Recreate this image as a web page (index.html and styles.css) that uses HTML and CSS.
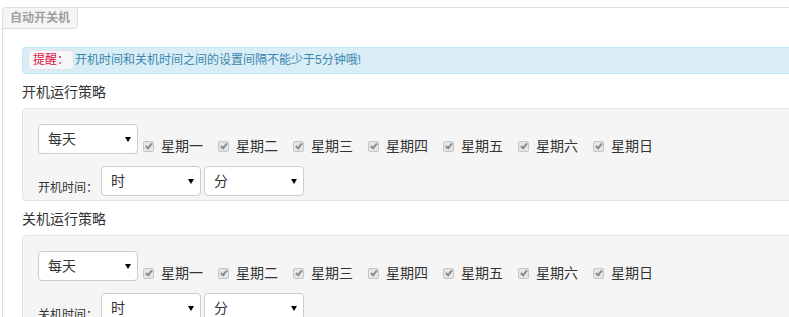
FILE: index.html
```html
<!DOCTYPE html>
<html lang="zh-CN">
<head>
    <meta charset="UTF-8">
    <meta name="viewport" content="width=device-width, initial-scale=1.0">
    <title>自动开关机</title>
    <link rel="stylesheet" href="styles.css">
</head>
<body>
    <div class="example">
        <span class="legend">自动开关机</span>

        <div class="alert"><code>提醒：</code>开机时间和关机时间之间的设置间隔不能少于5分钟哦!</div>

        <!-- 开机 -->
        <h4 class="title">开机运行策略</h4>
        <div class="well">
            <div class="row">
                <span class="sel"><select><option>每天</option></select></span>
                <div class="days">
                    <label class="day"><span class="cb"></span>星期一</label>
                    <label class="day"><span class="cb"></span>星期二</label>
                    <label class="day"><span class="cb"></span>星期三</label>
                    <label class="day"><span class="cb"></span>星期四</label>
                    <label class="day"><span class="cb"></span>星期五</label>
                    <label class="day"><span class="cb"></span>星期六</label>
                    <label class="day"><span class="cb"></span>星期日</label>
                </div>
            </div>
            <div class="row time-row">
                <span class="time-label">开机时间：</span>
                <span class="sel"><select><option>时</option></select></span>
                <span class="sel"><select><option>分</option></select></span>
            </div>
        </div>

        <!-- 关机 -->
        <h4 class="title">关机运行策略</h4>
        <div class="well">
            <div class="row">
                <span class="sel"><select><option>每天</option></select></span>
                <div class="days">
                    <label class="day"><span class="cb"></span>星期一</label>
                    <label class="day"><span class="cb"></span>星期二</label>
                    <label class="day"><span class="cb"></span>星期三</label>
                    <label class="day"><span class="cb"></span>星期四</label>
                    <label class="day"><span class="cb"></span>星期五</label>
                    <label class="day"><span class="cb"></span>星期六</label>
                    <label class="day"><span class="cb"></span>星期日</label>
                </div>
            </div>
            <div class="row time-row">
                <span class="time-label">关机时间：</span>
                <span class="sel"><select><option>时</option></select></span>
                <span class="sel"><select><option>分</option></select></span>
            </div>
        </div>
    </div>
</body>
</html>
```

FILE: styles.css
```css
html, body {
    margin: 0;
    padding: 0;
    overflow: hidden;
    background-color: #fff;
}
body {
    font-family: "Liberation Sans", "Noto Sans CJK SC", sans-serif;
    font-size: 14px;
    color: #333;
}
.example {
    position: relative;
    width: 1000px;
    margin: 7px 0 0 2px;
    padding: 39px 19px 14px;
    border: 1px solid #ddd;
    border-radius: 4px;
}
.legend {
    position: absolute;
    top: -1px;
    left: -1px;
    padding: 3px 7px 3px;
    font-size: 12px;
    line-height: 14px;
    font-weight: bold;
    color: #9da0a4;
    background-color: #f5f5f5;
    border: 1px solid #ddd;
    border-radius: 4px 0 4px 0;
}
.alert {
    padding: 2px 5px 3px;
    font-size: 12px;
    line-height: 20px;
    color: #3a87ad;
    background-color: #d9edf7;
    border: 1px solid #bce8f1;
    border-radius: 4px;
}
.alert code {
    display: inline-block;
    padding: 0 4px;
    line-height: 18px;
    font-family: inherit;
    font-size: 12px;
    color: #d14;
    background-color: #f7f7f9;
    border: 1px solid #e1e1e8;
    border-radius: 3px;
    vertical-align: top;
    margin-right: 1px;
}
.title {
    margin: 8px 0 6px;
    font-size: 14px;
    line-height: 20px;
    font-weight: normal;
    color: #333;
}
.well {
    padding: 15px 15px 4px;
    background-color: #f5f5f5;
    border: 1px solid #e3e3e3;
    border-radius: 4px;
}
.row {
    display: flex;
    align-items: flex-start;
}
.time-row {
    margin-top: 10px;
    gap: 3px;
}
.sel {
    position: relative;
    display: inline-block;
    width: 100px;
    height: 30px;
}
.sel select {
    appearance: none;
    -webkit-appearance: none;
    box-sizing: border-box;
    width: 100px;
    height: 30px;
    margin: 0;
    padding: 0 20px 1px 9px;
    font-family: inherit;
    font-size: 14px;
    color: #333;
    background-color: #fff;
    border: 1px solid #ccc;
    border-radius: 4px;
    outline: none;
}
.sel::after {
    content: "";
    position: absolute;
    right: 7px;
    top: 13px;
    border-left: 3px solid transparent;
    border-right: 3px solid transparent;
    border-top: 5px solid #000;
    pointer-events: none;
}
.days {
    display: flex;
    gap: 15px;
    margin-left: 5px;
    margin-top: 12px;
}
.day {
    display: flex;
    align-items: center;
    line-height: 20px;
    color: #333;
}
.cb {
    position: relative;
    box-sizing: border-box;
    width: 11px;
    height: 11px;
    margin-right: 7px;
    background-color: #e6e6e6;
    border: 1px solid #c6c6c6;
    border-radius: 2px;
}
.cb::after {
    content: "";
    position: absolute;
    left: 3px;
    top: 0;
    width: 2px;
    height: 5px;
    border: solid #8c8c8c;
    border-width: 0 2px 2px 0;
    transform: rotate(40deg);
}
.time-label {
    box-sizing: border-box;
    height: 30px;
    padding-top: 15px;
    font-size: 12px;
    line-height: 14px;
    color: #333;
}
```
